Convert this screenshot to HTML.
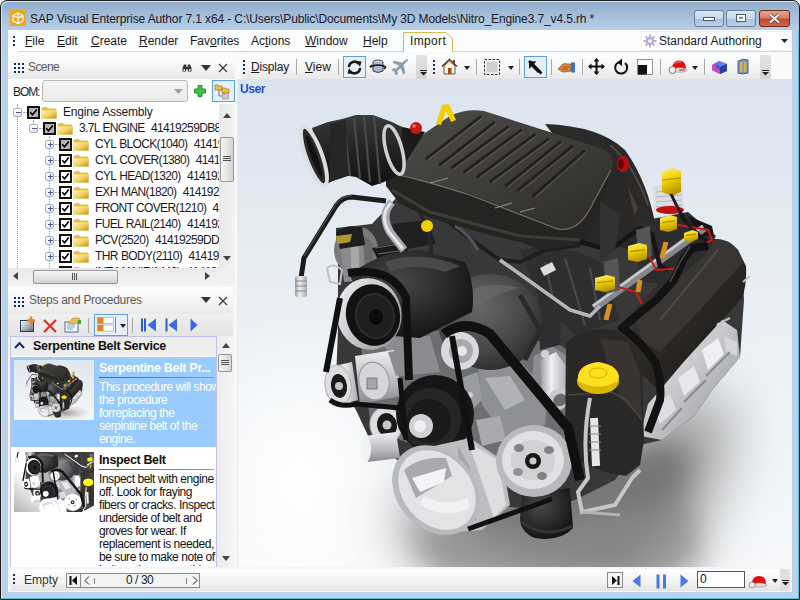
<!DOCTYPE html>
<html><head><meta charset="utf-8">
<style>
*{margin:0;padding:0;box-sizing:border-box}
html,body{width:800px;height:600px;overflow:hidden;background:#fff}
body{position:relative;font-family:"Liberation Sans",sans-serif;font-size:12px;color:#1e1e1e}
.a{position:absolute}
.t{position:absolute;white-space:nowrap;line-height:14px}
#frame{left:0;top:0;width:800px;height:600px;background:linear-gradient(#8fabc9 1px,#a2bcd8 12px,#b6cee7 29px,#b9d1ea 60px);border:1px solid #1a1a1a;border-radius:7px 7px 0 0;box-shadow:inset 1px 1px 0 #dbe7f3}
#client{left:8px;top:30px;width:784px;height:562px;background:#f5f6f7;overflow:hidden}
.u{text-decoration:underline}
.grip3{position:absolute;width:2px;height:2px;background:#1a2a6a}
.menu{font-size:12px;color:#1a1a1a}
.grip9{width:11px;height:11px;background-image:radial-gradient(circle,#102a6a 0,#102a6a 1px,transparent 1px);background-size:4px 4px;}
.tree{font-size:12px;color:#1a1a2a;letter-spacing:-0.65px;word-spacing:0.5px}
.desc{font-size:12px;line-height:14px;letter-spacing:-0.45px}
</style></head><body>
<div id="frame" class="a"></div>
<!-- bottom cyan line -->
<div class="a" style="left:1px;top:598px;width:798px;height:1px;background:#4cc4dc"></div>
<div class="a" style="left:798px;top:30px;width:1px;height:569px;background:#4cc4dc"></div>
<!-- title icon -->
<div class="a" style="left:10px;top:10px;width:16px;height:16px;background:#f0a820;border-radius:1px"></div>
<svg class="a" style="left:10px;top:10px" width="16" height="16"><path d="M8 3 L13 5.5 L13 11 L8 13.5 L3 11 L3 5.5 Z M8 3 V8 M3 5.5 L8 8 L13 5.5 M8 8 V13.5" fill="none" stroke="#fff" stroke-width="1.2"/></svg>
<div class="t" id="title" style="left:30px;top:12px;font-size:12px;color:#1a1a2a;letter-spacing:-0.12px">SAP Visual Enterprise Author 7.1 x64 - C:\Users\Public\Documents\My 3D Models\Nitro_Engine3.7_v4.5.rh *</div>
<!-- window buttons -->
<div class="a" style="left:694px;top:10px;width:30px;height:17px;border:1px solid #6a7d99;border-radius:3px;background:linear-gradient(#dce7f4 0,#c5d6ea 50%,#a9bfdb 51%,#bcd0e8 100%)"></div>
<div class="a" style="left:703px;top:17px;width:12px;height:4px;background:#fff;border:1px solid #4a5a70"></div>
<div class="a" style="left:726px;top:10px;width:30px;height:17px;border:1px solid #6a7d99;border-radius:3px;background:linear-gradient(#dce7f4 0,#c5d6ea 50%,#a9bfdb 51%,#bcd0e8 100%)"></div>
<div class="a" style="left:736px;top:14px;width:10px;height:8px;background:#fff;border:1px solid #4a5a70"></div>
<div class="a" style="left:739px;top:17px;width:4px;height:2px;background:#7090b0"></div>
<div class="a" style="left:759px;top:10px;width:31px;height:17px;border:1px solid #6a2a20;border-radius:3px;background:linear-gradient(#e8a090 0,#d8806a 45%,#c04a2c 55%,#d06848 100%)"></div>
<svg class="a" style="left:767px;top:12px" width="16" height="13"><path d="M3 2.5 L12 10.5 M12 2.5 L3 10.5" stroke="#5a2a20" stroke-width="3.6"/><path d="M3 2.5 L12 10.5 M12 2.5 L3 10.5" stroke="#fff" stroke-width="2.2"/></svg>

<div id="client" class="a"></div>

<!-- MENU BAR -->
<div class="a" style="left:8px;top:30px;width:784px;height:22px;background:#fbfcfc"></div>
<div class="grip3" style="left:13px;top:36px"></div><div class="grip3" style="left:13px;top:40px"></div><div class="grip3" style="left:13px;top:44px"></div>
<div class="a" style="left:18px;top:51px;width:774px;height:1px;background:#d8d8d8"></div>
<div class="t menu" style="left:25px;top:34px"><span class="u">F</span>ile</div>
<div class="t menu" style="left:57px;top:34px"><span class="u">E</span>dit</div>
<div class="t menu" style="left:91px;top:34px"><span class="u">C</span>reate</div>
<div class="t menu" style="left:139px;top:34px"><span class="u">R</span>ender</div>
<div class="t menu" style="left:190px;top:34px">Fav<span class="u">o</span>rites</div>
<div class="t menu" style="left:251px;top:34px">Ac<span class="u">t</span>ions</div>
<div class="t menu" style="left:305px;top:34px"><span class="u">W</span>indow</div>
<div class="t menu" style="left:363px;top:34px"><span class="u">H</span>elp</div>
<svg class="a" style="left:400px;top:30px" width="58" height="24"><path d="M3.5 24 V2.5 H46 L52.5 9 V24" fill="#fff" stroke="#e6b34a" stroke-width="1"/></svg>
<div class="t menu" style="left:410px;top:34px;letter-spacing:0.35px">Import</div>
<!-- Standard authoring combo -->
<div class="a" style="left:641px;top:31px;width:150px;height:20px;background:#fff;border:1px solid #eef0f2"></div>
<svg class="a" style="left:643px;top:34px" width="14" height="14"><g transform="translate(7 7)"><circle r="4.3" fill="#b8b0e0"/><g fill="#b8b0e0"><rect x="-1" y="-6.5" width="2" height="13"/><rect x="-6.5" y="-1" width="13" height="2"/><rect x="-1" y="-6.5" width="2" height="13" transform="rotate(45)"/><rect x="-1" y="-6.5" width="2" height="13" transform="rotate(-45)"/></g><circle r="1.8" fill="#fff"/></g></svg>
<div class="t menu" style="left:659px;top:34px">Standard Authoring</div>
<svg class="a" style="left:781px;top:39px" width="7" height="4"><path d="M0 0 H7 L3.5 4Z" fill="#222"/></svg>

<!-- SCENE PANEL -->
<div class="a" style="left:8px;top:52px;width:227px;height:27px;background:linear-gradient(#fdfdfd 0,#fafafa 40%,#e9e9e9 100%)"></div>
<div class="grip9 a" style="left:13px;top:62px"></div>
<div class="t" style="left:28px;top:60px;color:#5a5a5a;letter-spacing:-0.6px">Scene</div>
<svg class="a" style="left:182px;top:64px" width="11" height="8"><path d="M2 0.5 H4.3 V2.5 L5 3.2 L5.7 2.5 V0.5 H8 L9.5 4 V7.5 H6 V5.5 H4 V7.5 H0.5 V4Z" fill="#333"/><rect x="1.5" y="5" width="1.5" height="2" fill="#ddd"/><rect x="7" y="5" width="1.5" height="2" fill="#ddd"/></svg>
<svg class="a" style="left:201px;top:65px" width="10" height="6"><path d="M0 0 H10 L5 6Z" fill="#333"/></svg>
<svg class="a" style="left:218px;top:63px" width="10" height="10"><path d="M1 1 L9 9 M9 1 L1 9" stroke="#3a3a3a" stroke-width="1.15"/></svg>
<div class="a" style="left:8px;top:79px;width:227px;height:189px;background:#fff"></div>
<div class="t" style="left:13px;top:85px;letter-spacing:-1.1px">BOM:</div>
<div class="a" style="left:42px;top:80px;width:146px;height:22px;border:1px solid #b8b8b8;border-radius:3px;background:linear-gradient(#f4f4f4,#ececec)"></div>
<svg class="a" style="left:174px;top:89px" width="9" height="5"><path d="M0 0 H9 L4.5 5Z" fill="#a0a0a0"/></svg>
<svg class="a" style="left:194px;top:85px" width="12" height="12"><path d="M4 0.5 H8 V4 H11.5 V8 H8 V11.5 H4 V8 H0.5 V4 H4Z" fill="#3cc43c" stroke="#1a7a1a" stroke-width="0.8"/></svg>
<div class="a" style="left:212px;top:80px;width:23px;height:22px;border:1px solid #5aa0e8;background:#e4f0fc"></div>
<svg class="a" style="left:214px;top:83px" width="20" height="17"><path d="M1 2 H4 L5 3 H8 V7 H1Z" fill="#f0c040" stroke="#a07020" stroke-width="0.7"/><path d="M8 5 H11 L12 6 H15 V10 H8Z" fill="#f0c040" stroke="#a07020" stroke-width="0.7"/><path d="M5 7 V13 H9 M10 10 V13" stroke="#555" stroke-width="0.8" fill="none"/><rect x="8.5" y="11" width="6" height="5" fill="#ccc" stroke="#999" stroke-width="0.7"/></svg>

<svg width="0" height="0" style="position:absolute"><defs><linearGradient id="ng" x1="0" y1="0" x2="1" y2="1"><stop offset="0" stop-color="#fff"/><stop offset="1" stop-color="#606a80"/></linearGradient><linearGradient id="fg" x1="0" y1="0" x2="1" y2="1"><stop offset="0" stop-color="#fff4c0"/><stop offset="0.5" stop-color="#f4d468"/><stop offset="1" stop-color="#c89020"/></linearGradient></defs></svg><div class="a" style="left:8px;top:104px;width:211px;height:164px;overflow:hidden">
<div class="a" style="left:9px;top:0;width:1px;height:164px;border-left:1px dotted #a0a0a0"></div>
<div class="a" style="left:25px;top:16px;width:1px;height:8px;border-left:1px dotted #a0a0a0"></div>
<div class="a" style="left:41px;top:32px;width:1px;height:132px;border-left:1px dotted #a0a0a0"></div>
<div class="a" style="left:5px;top:4px;width:9px;height:9px;border:1px solid #a8b0bc;border-radius:2px;background:linear-gradient(#fff,#e4e6ea)"><div class="a" style="left:2px;top:3px;width:5px;height:1px;background:#4a5a9a"></div></div>
<div class="a" style="left:15px;top:8px;width:4px;height:1px;border-top:1px dotted #a0a0a0"></div>
<div class="a" style="left:19px;top:2px;width:13px;height:13px;border:2px solid #111;background:#b4b4b4"></div>
<svg class="a" style="left:21px;top:4px" width="9" height="9"><path d="M1.2 4.3 L3.5 6.8 L7.8 1.5" fill="none" stroke="#000" stroke-width="1.6"/></svg>
<svg class="a" style="left:33px;top:2px" width="16" height="13"><path d="M0.5 2.5 Q0.5 1 2 1 H6 L7 2.5 H14 Q15.5 2.5 15.5 4 V12.5 H0.5Z" fill="#e8c048"/><path d="M0.5 4.5 H15.5 V12.5 H0.5Z" fill="url(#fg)"/></svg>
<div class="t tree" style="left:55px;top:1px;letter-spacing:-0.2px">Engine Assembly</div>
<div class="a" style="left:21px;top:20px;width:9px;height:9px;border:1px solid #a8b0bc;border-radius:2px;background:linear-gradient(#fff,#e4e6ea)"><div class="a" style="left:2px;top:3px;width:5px;height:1px;background:#4a5a9a"></div></div>
<div class="a" style="left:31px;top:24px;width:4px;height:1px;border-top:1px dotted #a0a0a0"></div>
<div class="a" style="left:35px;top:18px;width:13px;height:13px;border:2px solid #111;background:#b4b4b4"></div>
<svg class="a" style="left:37px;top:20px" width="9" height="9"><path d="M1.2 4.3 L3.5 6.8 L7.8 1.5" fill="none" stroke="#000" stroke-width="1.6"/></svg>
<svg class="a" style="left:49px;top:18px" width="16" height="13"><path d="M0.5 2.5 Q0.5 1 2 1 H6 L7 2.5 H14 Q15.5 2.5 15.5 4 V12.5 H0.5Z" fill="#e8c048"/><path d="M0.5 4.5 H15.5 V12.5 H0.5Z" fill="url(#fg)"/></svg>
<div class="t tree" style="left:71px;top:17px">3.7L ENGINE&nbsp; 41419259DB8</div>
<div class="a" style="left:37px;top:36px;width:9px;height:9px;border:1px solid #a8b0bc;border-radius:2px;background:linear-gradient(#fff,#e4e6ea)"><div class="a" style="left:2px;top:3px;width:5px;height:1px;background:#4a5a9a"></div><div class="a" style="left:4px;top:1px;width:1px;height:5px;background:#4a5a9a"></div></div>
<div class="a" style="left:47px;top:40px;width:4px;height:1px;border-top:1px dotted #a0a0a0"></div>
<div class="a" style="left:51px;top:34px;width:13px;height:13px;border:2px solid #111;background:#b4b4b4"></div>
<svg class="a" style="left:53px;top:36px" width="9" height="9"><path d="M1.2 4.3 L3.5 6.8 L7.8 1.5" fill="none" stroke="#000" stroke-width="1.6"/></svg>
<svg class="a" style="left:65px;top:34px" width="16" height="13"><path d="M0.5 2.5 Q0.5 1 2 1 H6 L7 2.5 H14 Q15.5 2.5 15.5 4 V12.5 H0.5Z" fill="#e8c048"/><path d="M0.5 4.5 H15.5 V12.5 H0.5Z" fill="url(#fg)"/></svg>
<div class="t tree" style="left:87px;top:33px">CYL BLOCK(1040)&nbsp; 41419259DB8</div>
<div class="a" style="left:37px;top:52px;width:9px;height:9px;border:1px solid #a8b0bc;border-radius:2px;background:linear-gradient(#fff,#e4e6ea)"><div class="a" style="left:2px;top:3px;width:5px;height:1px;background:#4a5a9a"></div><div class="a" style="left:4px;top:1px;width:1px;height:5px;background:#4a5a9a"></div></div>
<div class="a" style="left:47px;top:56px;width:4px;height:1px;border-top:1px dotted #a0a0a0"></div>
<div class="a" style="left:51px;top:50px;width:13px;height:13px;border:2px solid #111;background:#fff"></div>
<svg class="a" style="left:53px;top:52px" width="9" height="9"><path d="M1.2 4.3 L3.5 6.8 L7.8 1.5" fill="none" stroke="#000" stroke-width="1.6"/></svg>
<svg class="a" style="left:65px;top:50px" width="16" height="13"><path d="M0.5 2.5 Q0.5 1 2 1 H6 L7 2.5 H14 Q15.5 2.5 15.5 4 V12.5 H0.5Z" fill="#e8c048"/><path d="M0.5 4.5 H15.5 V12.5 H0.5Z" fill="url(#fg)"/></svg>
<div class="t tree" style="left:87px;top:49px">CYL COVER(1380)&nbsp; 41419259DB8</div>
<div class="a" style="left:37px;top:68px;width:9px;height:9px;border:1px solid #a8b0bc;border-radius:2px;background:linear-gradient(#fff,#e4e6ea)"><div class="a" style="left:2px;top:3px;width:5px;height:1px;background:#4a5a9a"></div><div class="a" style="left:4px;top:1px;width:1px;height:5px;background:#4a5a9a"></div></div>
<div class="a" style="left:47px;top:72px;width:4px;height:1px;border-top:1px dotted #a0a0a0"></div>
<div class="a" style="left:51px;top:66px;width:13px;height:13px;border:2px solid #111;background:#fff"></div>
<svg class="a" style="left:53px;top:68px" width="9" height="9"><path d="M1.2 4.3 L3.5 6.8 L7.8 1.5" fill="none" stroke="#000" stroke-width="1.6"/></svg>
<svg class="a" style="left:65px;top:66px" width="16" height="13"><path d="M0.5 2.5 Q0.5 1 2 1 H6 L7 2.5 H14 Q15.5 2.5 15.5 4 V12.5 H0.5Z" fill="#e8c048"/><path d="M0.5 4.5 H15.5 V12.5 H0.5Z" fill="url(#fg)"/></svg>
<div class="t tree" style="left:87px;top:65px">CYL HEAD(1320)&nbsp; 41419259DB8</div>
<div class="a" style="left:37px;top:84px;width:9px;height:9px;border:1px solid #a8b0bc;border-radius:2px;background:linear-gradient(#fff,#e4e6ea)"><div class="a" style="left:2px;top:3px;width:5px;height:1px;background:#4a5a9a"></div><div class="a" style="left:4px;top:1px;width:1px;height:5px;background:#4a5a9a"></div></div>
<div class="a" style="left:47px;top:88px;width:4px;height:1px;border-top:1px dotted #a0a0a0"></div>
<div class="a" style="left:51px;top:82px;width:13px;height:13px;border:2px solid #111;background:#fff"></div>
<svg class="a" style="left:53px;top:84px" width="9" height="9"><path d="M1.2 4.3 L3.5 6.8 L7.8 1.5" fill="none" stroke="#000" stroke-width="1.6"/></svg>
<svg class="a" style="left:65px;top:82px" width="16" height="13"><path d="M0.5 2.5 Q0.5 1 2 1 H6 L7 2.5 H14 Q15.5 2.5 15.5 4 V12.5 H0.5Z" fill="#e8c048"/><path d="M0.5 4.5 H15.5 V12.5 H0.5Z" fill="url(#fg)"/></svg>
<div class="t tree" style="left:87px;top:81px">EXH MAN(1820)&nbsp; 41419259DB8</div>
<div class="a" style="left:37px;top:100px;width:9px;height:9px;border:1px solid #a8b0bc;border-radius:2px;background:linear-gradient(#fff,#e4e6ea)"><div class="a" style="left:2px;top:3px;width:5px;height:1px;background:#4a5a9a"></div><div class="a" style="left:4px;top:1px;width:1px;height:5px;background:#4a5a9a"></div></div>
<div class="a" style="left:47px;top:104px;width:4px;height:1px;border-top:1px dotted #a0a0a0"></div>
<div class="a" style="left:51px;top:98px;width:13px;height:13px;border:2px solid #111;background:#fff"></div>
<svg class="a" style="left:53px;top:100px" width="9" height="9"><path d="M1.2 4.3 L3.5 6.8 L7.8 1.5" fill="none" stroke="#000" stroke-width="1.6"/></svg>
<svg class="a" style="left:65px;top:98px" width="16" height="13"><path d="M0.5 2.5 Q0.5 1 2 1 H6 L7 2.5 H14 Q15.5 2.5 15.5 4 V12.5 H0.5Z" fill="#e8c048"/><path d="M0.5 4.5 H15.5 V12.5 H0.5Z" fill="url(#fg)"/></svg>
<div class="t tree" style="left:87px;top:97px">FRONT COVER(1210)&nbsp; 41419259DB8</div>
<div class="a" style="left:37px;top:116px;width:9px;height:9px;border:1px solid #a8b0bc;border-radius:2px;background:linear-gradient(#fff,#e4e6ea)"><div class="a" style="left:2px;top:3px;width:5px;height:1px;background:#4a5a9a"></div><div class="a" style="left:4px;top:1px;width:1px;height:5px;background:#4a5a9a"></div></div>
<div class="a" style="left:47px;top:120px;width:4px;height:1px;border-top:1px dotted #a0a0a0"></div>
<div class="a" style="left:51px;top:114px;width:13px;height:13px;border:2px solid #111;background:#fff"></div>
<svg class="a" style="left:53px;top:116px" width="9" height="9"><path d="M1.2 4.3 L3.5 6.8 L7.8 1.5" fill="none" stroke="#000" stroke-width="1.6"/></svg>
<svg class="a" style="left:65px;top:114px" width="16" height="13"><path d="M0.5 2.5 Q0.5 1 2 1 H6 L7 2.5 H14 Q15.5 2.5 15.5 4 V12.5 H0.5Z" fill="#e8c048"/><path d="M0.5 4.5 H15.5 V12.5 H0.5Z" fill="url(#fg)"/></svg>
<div class="t tree" style="left:87px;top:113px">FUEL RAIL(2140)&nbsp; 41419259DB8</div>
<div class="a" style="left:37px;top:132px;width:9px;height:9px;border:1px solid #a8b0bc;border-radius:2px;background:linear-gradient(#fff,#e4e6ea)"><div class="a" style="left:2px;top:3px;width:5px;height:1px;background:#4a5a9a"></div><div class="a" style="left:4px;top:1px;width:1px;height:5px;background:#4a5a9a"></div></div>
<div class="a" style="left:47px;top:136px;width:4px;height:1px;border-top:1px dotted #a0a0a0"></div>
<div class="a" style="left:51px;top:130px;width:13px;height:13px;border:2px solid #111;background:#fff"></div>
<svg class="a" style="left:53px;top:132px" width="9" height="9"><path d="M1.2 4.3 L3.5 6.8 L7.8 1.5" fill="none" stroke="#000" stroke-width="1.6"/></svg>
<svg class="a" style="left:65px;top:130px" width="16" height="13"><path d="M0.5 2.5 Q0.5 1 2 1 H6 L7 2.5 H14 Q15.5 2.5 15.5 4 V12.5 H0.5Z" fill="#e8c048"/><path d="M0.5 4.5 H15.5 V12.5 H0.5Z" fill="url(#fg)"/></svg>
<div class="t tree" style="left:87px;top:129px">PCV(2520)&nbsp; 41419259DDB8</div>
<div class="a" style="left:37px;top:148px;width:9px;height:9px;border:1px solid #a8b0bc;border-radius:2px;background:linear-gradient(#fff,#e4e6ea)"><div class="a" style="left:2px;top:3px;width:5px;height:1px;background:#4a5a9a"></div><div class="a" style="left:4px;top:1px;width:1px;height:5px;background:#4a5a9a"></div></div>
<div class="a" style="left:47px;top:152px;width:4px;height:1px;border-top:1px dotted #a0a0a0"></div>
<div class="a" style="left:51px;top:146px;width:13px;height:13px;border:2px solid #111;background:#fff"></div>
<svg class="a" style="left:53px;top:148px" width="9" height="9"><path d="M1.2 4.3 L3.5 6.8 L7.8 1.5" fill="none" stroke="#000" stroke-width="1.6"/></svg>
<svg class="a" style="left:65px;top:146px" width="16" height="13"><path d="M0.5 2.5 Q0.5 1 2 1 H6 L7 2.5 H14 Q15.5 2.5 15.5 4 V12.5 H0.5Z" fill="#e8c048"/><path d="M0.5 4.5 H15.5 V12.5 H0.5Z" fill="url(#fg)"/></svg>
<div class="t tree" style="left:87px;top:145px">THR BODY(2110)&nbsp; 41419259DB8</div>
<div class="a" style="left:37px;top:164px;width:9px;height:9px;border:1px solid #a8b0bc;border-radius:2px;background:linear-gradient(#fff,#e4e6ea)"><div class="a" style="left:2px;top:3px;width:5px;height:1px;background:#4a5a9a"></div><div class="a" style="left:4px;top:1px;width:1px;height:5px;background:#4a5a9a"></div></div>
<div class="a" style="left:47px;top:168px;width:4px;height:1px;border-top:1px dotted #a0a0a0"></div>
<div class="a" style="left:51px;top:162px;width:13px;height:13px;border:2px solid #111;background:#fff"></div>
<svg class="a" style="left:53px;top:164px" width="9" height="9"><path d="M1.2 4.3 L3.5 6.8 L7.8 1.5" fill="none" stroke="#000" stroke-width="1.6"/></svg>
<svg class="a" style="left:65px;top:162px" width="16" height="13"><path d="M0.5 2.5 Q0.5 1 2 1 H6 L7 2.5 H14 Q15.5 2.5 15.5 4 V12.5 H0.5Z" fill="#e8c048"/><path d="M0.5 4.5 H15.5 V12.5 H0.5Z" fill="url(#fg)"/></svg>
<div class="t tree" style="left:87px;top:161px">INT MANIF(1440)&nbsp; 41419259DB8</div>
</div>
<div class="a" style="left:219px;top:104px;width:16px;height:164px;background:linear-gradient(90deg,#e8e8e8,#f4f4f4)"></div>
<svg class="a" style="left:223px;top:113px" width="8" height="5"><path d="M0 5 L4 0 L8 5Z" fill="#444"/></svg>
<div class="a" style="left:220px;top:137px;width:14px;height:45px;border:1px solid #989898;border-radius:2px;background:linear-gradient(90deg,#f4f4f4,#e6e6e6 50%,#d4d4d4)"></div>
<div class="a" style="left:223px;top:156px;width:8px;height:1px;background:#555"></div>
<div class="a" style="left:223px;top:158px;width:8px;height:1px;background:#555"></div>
<div class="a" style="left:223px;top:160px;width:8px;height:1px;background:#555"></div>
<svg class="a" style="left:223px;top:256px" width="8" height="5"><path d="M0 0 L4 5 L8 0Z" fill="#444"/></svg>
<!-- hscroll -->
<div class="a" style="left:8px;top:268px;width:227px;height:17px;background:linear-gradient(#e8e8e8,#f4f4f4)"></div>
<svg class="a" style="left:13px;top:272px" width="5" height="8"><path d="M5 0 L0 4 L5 8Z" fill="#444"/></svg>
<div class="a" style="left:33px;top:270px;width:85px;height:14px;border:1px solid #989898;border-radius:2px;background:linear-gradient(#f6f6f6,#e6e6e6 50%,#d2d2d2)"></div>
<div class="a" style="left:72px;top:273px;width:1px;height:7px;background:#555"></div>
<div class="a" style="left:74px;top:273px;width:1px;height:7px;background:#555"></div>
<div class="a" style="left:76px;top:273px;width:1px;height:7px;background:#555"></div>
<svg class="a" style="left:205px;top:272px" width="5" height="8"><path d="M0 0 L5 4 L0 8Z" fill="#444"/></svg><div class="a" style="left:217px;top:268px;width:18px;height:17px;background:#f0f0f0"></div>


<!-- splitter -->
<div class="a" style="left:235px;top:52px;width:3px;height:516px;background:#f8f9fa"></div>
<div class="a" style="left:8px;top:284px;width:227px;height:3px;background:#f4f4f4"></div>
<!-- STEPS PANEL -->
<div class="a" style="left:8px;top:287px;width:225px;height:27px;background:linear-gradient(#fdfdfd 0,#f8f8f8 40%,#e9e9e9 100%)"></div>
<div class="grip9 a" style="left:13px;top:296px"></div>
<div class="t" style="left:29px;top:293px;color:#5a5a5a;letter-spacing:-0.3px">Steps and Procedures</div>
<svg class="a" style="left:201px;top:297px" width="10" height="6"><path d="M0 0 H10 L5 6Z" fill="#333"/></svg>
<svg class="a" style="left:218px;top:296px" width="10" height="10"><path d="M1 1 L9 9 M9 1 L1 9" stroke="#3a3a3a" stroke-width="1.15"/></svg>
<div class="a" style="left:8px;top:314px;width:225px;height:23px;background:linear-gradient(#f0f0f0,#e4e4e4);border-radius:0 6px 0 0"></div>
<svg class="a" style="left:19px;top:316px" width="18" height="18"><rect x="1.5" y="4.5" width="13" height="11" fill="url(#ng)" stroke="#2a3a5a" stroke-width="1"/><path d="M12 0.5 V8.5 M8 4.5 H16" stroke="#f08020" stroke-width="2.5"/></svg>
<svg class="a" style="left:42px;top:318px" width="16" height="16"><path d="M2 2 L14 14 M14 2 L2 14" stroke="#e03020" stroke-width="2.2"/></svg>
<svg class="a" style="left:64px;top:317px" width="18" height="16"><rect x="1" y="5" width="13" height="10" fill="#f4f8fc" stroke="#4a6a9a"/><path d="M3 8 H11 M3 10 H11 M3 12 H9" stroke="#6a8aba" stroke-width="0.8"/><path d="M4 6 L9 1 H15 L16 4 L11 7Z" fill="#e8c050" stroke="#a08030" stroke-width="0.6"/><rect x="14" y="3" width="3" height="4" fill="#40a040"/></svg>
<div class="a" style="left:88px;top:318px;width:1px;height:15px;background:#a8a8a8"></div>
<div class="a" style="left:94px;top:314px;width:34px;height:22px;border:1px solid #60a0e0;background:#e6f0fa"></div>
<svg class="a" style="left:97px;top:317px" width="17" height="15"><rect x="0.5" y="0.5" width="16" height="6" fill="#fff" stroke="#999" stroke-width="0.6"/><rect x="0.5" y="8" width="16" height="6" fill="#fff" stroke="#999" stroke-width="0.6"/><rect x="0.5" y="0.5" width="6" height="6" fill="#e88420"/><rect x="0.5" y="8" width="6" height="6" fill="#e88420"/></svg>
<div class="a" style="left:115px;top:317px;width:1px;height:16px;background:#5090e0"></div>
<svg class="a" style="left:120px;top:324px" width="6" height="4"><path d="M0 0 H6 L3 4Z" fill="#222"/></svg>
<div class="a" style="left:132px;top:318px;width:1px;height:15px;background:#a8a8a8"></div>
<svg class="a" style="left:140px;top:318px" width="17" height="14"><rect x="1" y="0.5" width="2" height="13" fill="#2a5ad0"/><rect x="4" y="0.5" width="2" height="13" fill="#2a5ad0"/><path d="M16 0.5 L7.5 7 L16 13.5Z" fill="#3a6ae0"/></svg>
<svg class="a" style="left:165px;top:318px" width="13" height="14"><rect x="0.5" y="0.5" width="2" height="13" fill="#2a5ad0"/><path d="M12 0.5 L3.5 7 L12 13.5Z" fill="#3a6ae0"/></svg>
<svg class="a" style="left:190px;top:318px" width="8" height="14"><path d="M0.5 0.5 L7.5 7 L0.5 13.5Z" fill="#3a6ae0"/></svg>
<!-- list -->
<div class="a" style="left:10px;top:336px;width:207px;height:231px;background:#fff;border:1px solid #c0c0f0;border-bottom:none"></div>
<div class="a" style="left:217px;top:336px;width:16px;height:231px;background:linear-gradient(90deg,#ececec,#f6f6f6)"></div>
<svg class="a" style="left:222px;top:343px" width="8" height="5"><path d="M0 5 L4 0 L8 5Z" fill="#444"/></svg>
<div class="a" style="left:218px;top:354px;width:14px;height:18px;border:1px solid #989898;border-radius:2px;background:linear-gradient(90deg,#f4f4f4,#e6e6e6 50%,#d4d4d4)"></div>
<div class="a" style="left:221px;top:360px;width:8px;height:1px;background:#555"></div>
<div class="a" style="left:221px;top:362px;width:8px;height:1px;background:#555"></div>
<div class="a" style="left:221px;top:364px;width:8px;height:1px;background:#555"></div>
<svg class="a" style="left:222px;top:556px" width="8" height="5"><path d="M0 0 L4 5 L8 0Z" fill="#444"/></svg>
<div class="a" style="left:11px;top:337px;width:205px;height:19px;background:#eeeeee"></div>
<svg class="a" style="left:14px;top:341px" width="11" height="8"><path d="M1 7 L5.5 2 L10 7" fill="none" stroke="#1a2a80" stroke-width="2"/></svg>
<div class="t" style="left:33px;top:339px;font-weight:bold;font-size:12.5px;color:#111;letter-spacing:-0.29px">Serpentine Belt Service</div>
<!-- selected item -->
<div class="a" style="left:11px;top:357px;width:205px;height:90px;background:#99cbfe"></div>
<svg class="a" style="left:14px;top:360px" width="80" height="60"><defs><radialGradient id="tsh" cx="0.5" cy="0.5" r="0.5"><stop offset="0" stop-color="#909090"/><stop offset="1" stop-color="#d0d0d0" stop-opacity="0"/></radialGradient><linearGradient id="tbg" x1="0" y1="0" x2="0" y2="1"><stop offset="0" stop-color="#dfe6ee"/><stop offset="1" stop-color="#f6f8fa"/></linearGradient></defs><rect width="80" height="60" fill="url(#tbg)"/><ellipse cx="50" cy="53" rx="28" ry="8" fill="url(#tsh)"/><g transform="translate(-25.3 -10.4) scale(0.126)"><use href="#eng"/></g></svg>
<div class="t" style="left:99px;top:361px;font-weight:bold;font-size:12.5px;color:#fff;letter-spacing:-0.3px">Serpentine Belt Pr...</div>
<div class="a" style="left:99px;top:377px;width:115px;height:1px;background:linear-gradient(90deg,#d83030,#f08030)"></div>
<div class="a" style="left:99px;top:378px;width:117px;height:68px;overflow:hidden"><div class="t desc" style="left:0;top:2px;color:#fff">This procedure will show</div><div class="t desc" style="left:0;top:15px;color:#fff">the procedure</div><div class="t desc" style="left:0;top:28px;color:#fff">forreplacing the</div><div class="t desc" style="left:0;top:41px;color:#fff">serpintine belt of the</div><div class="t desc" style="left:0;top:54px;color:#fff">engine.</div></div>
<!-- item 2 -->
<svg class="a" style="left:14px;top:452px;filter:brightness(1.3)" width="80" height="60"><defs><linearGradient id="t2bg" x1="1" y1="0" x2="0" y2="1"><stop offset="0" stop-color="#ffffff"/><stop offset="0.6" stop-color="#c8c8c8"/><stop offset="1" stop-color="#8a8a8a"/></linearGradient></defs><rect width="80" height="60" fill="url(#t2bg)"/><g transform="translate(-69.3 -60.4) scale(0.24)"><use href="#eng"/></g></svg>
<div class="t" style="left:99px;top:453px;font-weight:bold;font-size:12.5px;color:#111;letter-spacing:-0.35px">Inspect Belt</div>
<div class="a" style="left:99px;top:469px;width:115px;height:1px;background:linear-gradient(90deg,#d83030,#f08030)"></div>
<div class="a" style="left:99px;top:470px;width:118px;height:96px;overflow:hidden"><div class="t desc" style="left:0;top:2px;color:#111">Inspect belt with engine</div><div class="t desc" style="left:0;top:15px;color:#111">off. Look for fraying</div><div class="t desc" style="left:0;top:28px;color:#111">fibers or cracks. Inspect</div><div class="t desc" style="left:0;top:41px;color:#111">underside of belt and</div><div class="t desc" style="left:0;top:54px;color:#111">groves for wear. If</div><div class="t desc" style="left:0;top:67px;color:#111">replacement is needed,</div><div class="t desc" style="left:0;top:80px;color:#111">be sure to make note of</div><div class="t desc" style="left:0;top:93px;color:#111">belt routing or use this</div></div>

<!-- BOTTOM TOOLBAR -->
<div class="a" style="left:8px;top:567px;width:784px;height:25px;background:#f4f5f6"></div>
<div class="a" style="left:10px;top:569px;width:780px;height:22px;border-radius:3px;background:linear-gradient(#fdfdfd,#f2f2f2 60%,#e4e4e4)"></div>
<div class="grip3" style="left:13px;top:574px"></div><div class="grip3" style="left:13px;top:578px"></div><div class="grip3" style="left:13px;top:582px"></div>
<div class="t" style="left:24px;top:573px;color:#333">Empty</div>
<div class="a" style="left:66px;top:573px;width:134px;height:15px;border:1px solid #8a8a8a;background:#f4f4f4"></div>
<div class="a" style="left:80px;top:573px;width:1px;height:15px;background:#8a8a8a"></div>
<svg class="a" style="left:69px;top:576px" width="9" height="9"><rect x="0.5" y="0" width="2" height="9" fill="#111"/><path d="M8 0 L3 4.5 L8 9Z" fill="#111"/></svg>
<svg class="a" style="left:84px;top:576px" width="6" height="9"><path d="M5 0.5 L1 4.5 L5 8.5" fill="none" stroke="#222" stroke-width="1"/></svg>
<div class="a" style="left:94px;top:578px;width:1px;height:6px;background:#888"></div>
<div class="t" style="left:126px;top:573px;color:#222;letter-spacing:-0.45px">0 / 30</div>
<div class="a" style="left:186px;top:578px;width:1px;height:6px;background:#888"></div>
<svg class="a" style="left:192px;top:576px" width="6" height="9"><path d="M1 0.5 L5 4.5 L1 8.5" fill="none" stroke="#222" stroke-width="1"/></svg>
<div class="a" style="left:607px;top:572px;width:16px;height:16px;border:1px solid #8a8a8a;background:#f6f6f6"></div>
<svg class="a" style="left:611px;top:576px" width="9" height="9"><path d="M1 0 L6 4.5 L1 9Z" fill="#111"/><rect x="6.5" y="0" width="2" height="9" fill="#111"/></svg>
<svg class="a" style="left:632px;top:574px" width="9" height="14"><path d="M8.5 0.5 L0.5 7 L8.5 13.5Z" fill="#4a7ae8"/></svg>
<svg class="a" style="left:656px;top:574px" width="11" height="15"><rect x="0.5" y="0.5" width="3" height="14" fill="#4a7ae8"/><rect x="7" y="0.5" width="3" height="14" fill="#4a7ae8"/></svg>
<svg class="a" style="left:680px;top:574px" width="9" height="14"><path d="M0.5 0.5 L8.5 7 L0.5 13.5Z" fill="#4a7ae8"/></svg>
<div class="a" style="left:697px;top:571px;width:48px;height:17px;border:1px solid #555;background:#fff"></div>
<div class="t" style="left:700px;top:572px;color:#111;font-size:12px">0</div>
<svg class="a" style="left:748px;top:574px" width="20" height="15"><path d="M4 10 Q4 2 11 2 Q18 2 18 10Z" fill="#e41010"/><ellipse cx="11" cy="11" rx="8" ry="2" fill="#ddd" stroke="#888" stroke-width="0.6"/><circle cx="4" cy="11" r="3" fill="#eee" stroke="#777" stroke-width="0.7"/></svg>
<svg class="a" style="left:772px;top:579px" width="6" height="4"><path d="M0 0 H6 L3 4Z" fill="#222"/></svg>
<div class="a" style="left:780px;top:569px;width:10px;height:22px;background:#e0e0e0;border-radius:0 3px 3px 0"></div>
<svg class="a" style="left:782px;top:580px" width="7" height="6"><rect x="0" y="0" width="7" height="1" fill="#222"/><path d="M0 2 H7 L3.5 5.5Z" fill="#222"/></svg>


<!-- TOOLBAR ROW -->
<div class="a" style="left:238px;top:52px;width:554px;height:27px;background:#f9fafb"></div>
<div class="a" style="left:241px;top:55px;width:186px;height:24px;border-radius:3px 3px 0 0;background:linear-gradient(#fefefe,#f6f6f6 50%,#e8e8e8)"></div>
<div class="a" style="left:416px;top:55px;width:11px;height:24px;border-radius:0 3px 3px 0;background:linear-gradient(#e2e2e2,#d4d4d4)"></div>
<svg class="a" style="left:420px;top:70px" width="7" height="6"><rect x="0" y="0" width="7" height="1" fill="#222"/><path d="M0 2 H7 L3.5 5.5Z" fill="#222"/></svg>
<div class="grip3" style="left:243px;top:60px"></div><div class="grip3" style="left:243px;top:64px"></div><div class="grip3" style="left:243px;top:68px"></div><div class="grip3" style="left:243px;top:72px"></div>
<div class="t menu" style="left:251px;top:60px;letter-spacing:-0.2px"><span class="u">D</span>isplay</div>
<div class="a" style="left:296px;top:59px;width:1px;height:16px;background:#a8a8a8"></div>
<div class="t menu" style="left:305px;top:60px"><span class="u">V</span>iew</div>
<div class="a" style="left:338px;top:59px;width:1px;height:16px;background:#a8a8a8"></div>
<div class="a" style="left:343px;top:56px;width:23px;height:22px;border:1px solid #60a0e0;background:#e4f0fb"></div>
<svg class="a" style="left:346px;top:59px" width="17" height="17"><path d="M3 8 A5.5 5.5 0 0 1 13 5" fill="none" stroke="#1a1a1a" stroke-width="2.6"/><path d="M14 9 A5.5 5.5 0 0 1 4 12" fill="none" stroke="#1a1a1a" stroke-width="2.6"/><path d="M10 2 L15.5 2.5 L14 8Z" fill="#1a1a1a"/><path d="M7 15 L1.5 14.5 L3 9Z" fill="#1a1a1a"/></svg>
<svg class="a" style="left:369px;top:58px" width="18" height="18"><ellipse cx="9" cy="4" rx="5" ry="2" fill="#d0d8e8" stroke="#333" stroke-width="0.9"/><path d="M4 4 V13 Q9 16 14 13 V4" fill="#a8b8d0" stroke="#333" stroke-width="0.9"/><path d="M1 9 Q9 5 17 9" fill="none" stroke="#111" stroke-width="1.6"/><path d="M1 9 L3 7 M17 9 L15 11" stroke="#111" stroke-width="1.4"/></svg>
<svg class="a" style="left:391px;top:58px" width="18" height="18"><path d="M15.5 1.5 Q17 1 16.5 2.5 L12 7 L14 15 L12.5 16 L9.5 9.5 L6 13 L6.5 16 L5 17 L3.5 13.5 L1 12 L2 10.5 L5 11 L8.5 7.5 L2 4.5 L3 3 L11 5Z" fill="#88a0b8" stroke="#6a8098" stroke-width="0.5"/></svg>

<div class="a" style="left:428px;top:55px;width:343px;height:24px;border-radius:3px 3px 0 0;background:linear-gradient(#fefefe,#f6f6f6 50%,#e8e8e8)"></div>
<div class="a" style="left:760px;top:55px;width:11px;height:24px;border-radius:0 3px 3px 0;background:linear-gradient(#e2e2e2,#d4d4d4)"></div>
<svg class="a" style="left:762px;top:70px" width="7" height="6"><rect x="0" y="0" width="7" height="1" fill="#222"/><path d="M0 2 H7 L3.5 5.5Z" fill="#222"/></svg>
<div class="grip3" style="left:433px;top:60px"></div><div class="grip3" style="left:433px;top:64px"></div><div class="grip3" style="left:433px;top:68px"></div><div class="grip3" style="left:433px;top:72px"></div>
<svg class="a" style="left:441px;top:58px" width="17" height="17"><path d="M1 8.5 L8.5 1.5 L16 8.5" fill="none" stroke="#5a3a20" stroke-width="1.6"/><path d="M3 8 V16 H14 V8 L8.5 3Z" fill="#f8f0e0" stroke="#6a4a30" stroke-width="0.9"/><rect x="7" y="10" width="3.5" height="6" fill="#a0501a"/><rect x="12" y="2" width="2" height="4" fill="#6a4a30"/></svg>
<svg class="a" style="left:464px;top:66px" width="6" height="4"><path d="M0 0 H6 L3 4Z" fill="#222"/></svg>
<div class="a" style="left:476px;top:59px;width:1px;height:16px;background:#a8a8a8"></div>
<svg class="a" style="left:484px;top:59px" width="16" height="16"><rect x="2.5" y="2.5" width="11" height="11" fill="#d0d0d0"/><rect x="0.5" y="0.5" width="15" height="15" fill="none" stroke="#333" stroke-width="1" stroke-dasharray="2.5 1.5"/></svg>
<svg class="a" style="left:508px;top:66px" width="6" height="4"><path d="M0 0 H6 L3 4Z" fill="#222"/></svg>
<div class="a" style="left:519px;top:59px;width:1px;height:16px;background:#a8a8a8"></div>
<div class="a" style="left:524px;top:56px;width:23px;height:22px;border:1px solid #60a0e0;background:#e4f0fb"></div>
<svg class="a" style="left:527px;top:59px" width="17" height="17"><path d="M2 2 L2 10 L4.5 7.5 L11 14 L13.5 11.5 L7 5 L9.5 2.5Z" fill="#111"/><path d="M2 2 L14.5 14.5" stroke="#111" stroke-width="2.8"/></svg>
<div class="a" style="left:551px;top:59px;width:1px;height:16px;background:#a8a8a8"></div>
<svg class="a" style="left:557px;top:60px" width="19" height="14"><path d="M1 9 L6 4 Q8 3 10 4 L14 4 V11 L8 12 Q5 12 4 11Z" fill="#d88840" stroke="#8a4a18" stroke-width="0.7"/><path d="M6 7 H12 M5 9 H11" stroke="#8a4a18" stroke-width="0.7"/><rect x="14" y="2.5" width="4" height="10" fill="#2a7ad0"/></svg>
<div class="a" style="left:582px;top:59px;width:1px;height:16px;background:#a8a8a8"></div>
<svg class="a" style="left:588px;top:58px" width="17" height="17"><path d="M8.5 1 V16 M1 8.5 H16" stroke="#111" stroke-width="2"/><path d="M8.5 0 L5.5 3.5 H11.5Z M8.5 17 L5.5 13.5 H11.5Z M0 8.5 L3.5 5.5 V11.5Z M17 8.5 L13.5 5.5 V11.5Z" fill="#111"/></svg>
<svg class="a" style="left:613px;top:58px" width="16" height="17"><path d="M5 4.5 A6 6 0 1 0 12 5" fill="none" stroke="#111" stroke-width="2"/><path d="M9 0.5 L4 4.5 L9 8Z" fill="#111"/></svg>
<svg class="a" style="left:637px;top:59px" width="16" height="16"><rect x="0.5" y="0.5" width="15" height="15" fill="#fff" stroke="#777" stroke-width="0.8"/><rect x="1" y="6" width="9" height="9.5" fill="#111"/></svg>
<div class="a" style="left:660px;top:59px;width:1px;height:16px;background:#a8a8a8"></div>
<svg class="a" style="left:668px;top:59px" width="20" height="16"><path d="M4 10 Q4 1.5 11 1.5 Q18 1.5 18 10Z" fill="#e41010"/><path d="M5 5 Q9 2 13 3" stroke="#ff8080" stroke-width="1" fill="none"/><ellipse cx="12" cy="11" rx="7" ry="2.2" fill="#e8e8e8" stroke="#888" stroke-width="0.6"/><circle cx="4.5" cy="11" r="3.5" fill="#eee" stroke="#666" stroke-width="0.8"/><path d="M11 11 H17" stroke="#c00" stroke-width="1"/></svg>
<svg class="a" style="left:692px;top:66px" width="6" height="4"><path d="M0 0 H6 L3 4Z" fill="#222"/></svg>
<div class="a" style="left:704px;top:59px;width:1px;height:16px;background:#a8a8a8"></div>
<svg class="a" style="left:711px;top:58px" width="17" height="17"><path d="M1 7 L8 3 L16 6 V13 L9 16 L1 12Z" fill="#4060d0"/><path d="M1 7 L5 5 V10 L9 12 V16 L1 12Z" fill="#e040c0"/><path d="M5 5 L8 3 L16 6 L9 9Z" fill="#6080f0"/><path d="M9 9 L16 6 V13 L9 16Z" fill="#2a40a0"/></svg>
<svg class="a" style="left:736px;top:58px" width="15" height="17"><path d="M2 3 Q7 0 12 2 V15 Q7 17 2 15Z" fill="#6a9ad8" stroke="#2a4a80" stroke-width="0.8"/><rect x="4" y="4" width="2.5" height="10" fill="#e0b040"/><rect x="8" y="4" width="2.5" height="10" fill="#e0b040"/></svg>

<!-- VIEWPORT -->
<div class="a" style="left:237px;top:79px;width:1px;height:488px;background:#e8ecf0"></div>
<div id="vp" class="a" style="left:238px;top:79px;width:554px;height:488px;overflow:hidden;background:linear-gradient(#dbe3ee 0%,#e6ecf3 35%,#eef2f6 60%,#f6f8fa 100%)">
<!--ENGINE-->
<svg class="a" style="left:0;top:0" width="554" height="488" viewBox="238 79 554 488">
<defs>
<radialGradient id="shad" cx="0.5" cy="0.5" r="0.5"><stop offset="0" stop-color="#707070" stop-opacity="1"/><stop offset="0.45" stop-color="#8c8c8c" stop-opacity="0.9"/><stop offset="1" stop-color="#c0c0c0" stop-opacity="0"/></radialGradient>
<radialGradient id="glow" cx="0.5" cy="0.5" r="0.5"><stop offset="0" stop-color="#ffffff" stop-opacity="1"/><stop offset="1" stop-color="#ffffff" stop-opacity="0"/></radialGradient>
<linearGradient id="silv" x1="0" y1="0" x2="1" y2="1"><stop offset="0" stop-color="#f4f4f6"/><stop offset="0.5" stop-color="#c4c6ca"/><stop offset="1" stop-color="#8a8c90"/></linearGradient>
<linearGradient id="silvh" x1="0" y1="0" x2="1" y2="0"><stop offset="0" stop-color="#9a9ca0"/><stop offset="0.4" stop-color="#f0f0f2"/><stop offset="1" stop-color="#a8aaae"/></linearGradient>
<linearGradient id="silvv" x1="0" y1="0" x2="0" y2="1"><stop offset="0" stop-color="#f0f0f2"/><stop offset="0.6" stop-color="#b8babe"/><stop offset="1" stop-color="#88898c"/></linearGradient>
<linearGradient id="box" x1="0" y1="0" x2="1" y2="1"><stop offset="0" stop-color="#4e4c48"/><stop offset="0.6" stop-color="#3c3a36"/><stop offset="1" stop-color="#2e2c29"/></linearGradient>
<linearGradient id="vc" x1="0" y1="0" x2="1" y2="1"><stop offset="0" stop-color="#3a3734"/><stop offset="0.45" stop-color="#2e2b28"/><stop offset="1" stop-color="#161412"/></linearGradient>
<radialGradient id="blk" cx="0.4" cy="0.35" r="0.7"><stop offset="0" stop-color="#484848"/><stop offset="1" stop-color="#121212"/></radialGradient>
<radialGradient id="alt" cx="0.4" cy="0.35" r="0.75"><stop offset="0" stop-color="#68686a"/><stop offset="0.6" stop-color="#464648"/><stop offset="1" stop-color="#262628"/></radialGradient>
<linearGradient id="hose" x1="0" y1="0" x2="0" y2="1"><stop offset="0" stop-color="#3a3a3a"/><stop offset="0.5" stop-color="#222"/><stop offset="1" stop-color="#111"/></linearGradient>
<linearGradient id="crank" x1="0" y1="0" x2="0" y2="1"><stop offset="0" stop-color="#f4f4f6"/><stop offset="0.5" stop-color="#d0d2d6"/><stop offset="1" stop-color="#9a9ca0"/></linearGradient>
<linearGradient id="yel" x1="0" y1="0" x2="0.3" y2="1"><stop offset="0" stop-color="#fff27a"/><stop offset="0.5" stop-color="#f0d000"/><stop offset="1" stop-color="#b89600"/></linearGradient>
</defs>
<!-- background glow and shadow -->
<filter id="bl30" x="-50%" y="-50%" width="200%" height="200%"><feGaussianBlur stdDeviation="28"/></filter>
<filter id="bl15" x="-50%" y="-50%" width="200%" height="200%"><feGaussianBlur stdDeviation="14"/></filter>
<ellipse cx="300" cy="480" rx="130" ry="170" fill="url(#glow)" opacity="0.95"/>
<path d="M395 510 L430 575 L560 590 L670 590 L712 505 L735 425 L705 385 L600 440 L460 460Z" fill="#a0a0a0" filter="url(#bl30)"/>
<path d="M430 505 L520 555 L620 568 L672 520 L695 455 L660 440 L560 480Z" fill="#6e6e6e" filter="url(#bl15)" opacity="0.85"/>
<path d="M405 530 L440 575 L640 590 L700 560 L690 500 L540 520Z" fill="#8c8c8c" filter="url(#bl15)" opacity="0.7"/>
<g id="eng">
<!-- intake plenum behind -->
<path d="M545 124 Q600 126 625 150 Q648 182 656 228 L652 262 L600 268 L565 150Z" fill="#2c2a28"/>
<path d="M596 152 Q622 170 638 208 L630 224 Q614 188 590 170Z" fill="#45423e"/>
<path d="M610 145 Q634 165 648 205" fill="none" stroke="#55524e" stroke-width="1.5"/>
<path d="M550 238 L596 150 L625 175 L640 240 L600 268Z" fill="#2a2826"/>
<!-- general engine mass -->
<path d="M336 228 L372 224 L402 192 L560 240 L640 250 L700 250 L742 262 L744 300 L740 357 L712 390 L694 416 L662 440 L640 445 L615 480 L575 500 L540 510 L490 505 L430 475 L400 462 L370 440 L356 410 L336 380 L338 330 L338 262Z" fill="#383838"/>
<!-- intake manifold ribs center -->
<path d="M520 250 Q560 240 600 262 L620 320 L575 335 L540 300Z" fill="#2e2e2e"/>
<path d="M545 262 L560 330 M565 258 L585 325 M590 268 L600 320" stroke="#4a4a4a" stroke-width="2"/>
<path d="M540 268 L552 262 L556 270 L544 276Z" fill="#ddd"/>
<!-- upper left engine side -->
<path d="M336 230 L372 226 L398 196 L440 220 L430 262 L360 272 L337 262Z" fill="#3a3a3c"/>
<ellipse cx="356" cy="250" rx="22" ry="24" fill="#7a7a7c"/><ellipse cx="360" cy="252" rx="14" ry="16" fill="#6a6a6c"/><path d="M340 244 L363 242 L366 280 L344 282Z" fill="#8a8a8c"/>
<path d="M350 232 L358 231 L360 282 L352 283Z" fill="#a8a8aa"/>
<path d="M336 232 Q346 224 362 227 L365 245 L340 249Z" fill="#1e1e1e"/>
<path d="M336 236 L352 234 L350 242 L338 244Z" fill="#d8b830" opacity="0.8"/>
<path d="M372 248 L404 242 L414 264 L384 272Z" fill="#1a1a1a"/><path d="M392 224 L428 220 L436 244 L400 250Z" fill="#202020"/>
<path d="M375 248 L400 244 M378 254 L405 250" stroke="#666" stroke-width="1"/>
<!-- wiring center -->
<path d="M440 215 Q470 240 500 260 L520 262 L545 250 L580 245" fill="none" stroke="#1e1e1e" stroke-width="4"/>
<path d="M415 205 Q435 235 430 262" fill="none" stroke="#262626" stroke-width="4"/>
<path d="M455 226 Q470 235 478 250" fill="none" stroke="#50565e" stroke-width="3"/>
<!-- front cover area -->
<path d="M360 340 L440 330 L480 330 L560 345 L598 372 L602 430 L565 470 L500 472 L450 455 L400 440 L370 420Z" fill="#6c6e72"/>
<path d="M478 365 L520 362 L548 390 L545 425 L505 436 L482 405Z" fill="#8e9094"/>
<path d="M485 378 L510 376 L525 400 L505 410Z" fill="#b0b2b6"/>
<path d="M455 380 L478 372 L482 400 L462 420Z" fill="#9a9ca0"/>
<path d="M560 420 L590 410 L598 440 L570 455Z" fill="#9a9ca0"/>
<path d="M476 420 L500 416 L506 440 L482 446Z" fill="#a8aaae"/>
<circle cx="470" cy="395" r="3" fill="#d0d2d4"/><circle cx="512" cy="440" r="3" fill="#d0d2d4"/><circle cx="540" cy="432" r="3" fill="#c0c2c4"/>
<path d="M380 338 L430 336 L440 372 L400 376Z" fill="#8a8c90"/>
<!-- thermostat housing -->
<path d="M534 356 L552 346 L570 358 L574 398 L560 412 L540 404 L532 380Z" fill="#8c8e92"/>
<path d="M540 360 L556 352 L566 366 L568 396 L552 404 L542 392Z" fill="url(#silvh)"/>
<ellipse cx="559" cy="399" rx="12" ry="10" transform="rotate(-30 559 399)" fill="#c8cacc"/>
<ellipse cx="560" cy="400" rx="7" ry="6" transform="rotate(-30 560 400)" fill="#6a6c70"/>
<circle cx="545" cy="354" r="4" fill="#d0d2d4"/>
<!-- exhaust manifold right -->
<path d="M716 316 L737 330 L740 357 L712 390 L694 416 L662 440 L640 436 L648 404 L672 376 L698 344Z" fill="url(#silv)"/>





<path d="M702 350 L718 338 L724 354 L708 370Z" fill="#eeeff1"/>
<path d="M678 378 L694 366 L700 382 L684 396Z" fill="#e6e8ea"/>
<path d="M654 406 L670 394 L676 410 L660 424Z" fill="#dcdee2"/>
<path d="M724 336 L737 342 L737 356 L726 352Z" fill="#d4d6d8"/>
<path d="M706 376 L730 352 M684 402 L706 380 M662 430 L682 408" stroke="#8a8c90" stroke-width="2"/>
<!-- right valve cover -->
<path d="M708 240 Q726 236 738 250 L746 266 Q747 285 742 298 L722 320 L700 344 L658 390 L640 372 L624 342 L614 330 L632 312 L676 265Z" fill="url(#vc)"/>
<path d="M708 240 Q726 236 738 250 L743 262 L700 310 L660 352 L642 340 L636 322 L680 270Z" fill="#383532"/>
<path d="M718 250 L660 320" stroke="#4e4b47" stroke-width="2"/>
<circle cx="719" cy="325" r="2.5" fill="#c8c8c8"/><circle cx="691" cy="358" r="2.5" fill="#c8c8c8"/><circle cx="663" cy="393" r="2.5" fill="#c8c8c8"/><path d="M743 282 L750 276 M722 322 L730 318" stroke="#c0c0c0" stroke-width="2"/>
<!-- black hose along valve cover -->

<!-- coolant reservoir -->
<path d="M566 342 Q584 326 615 330 L632 344 L642 374 L644 440 L640 465 L626 476 L604 472 L580 462 L565 445Z" fill="#2a2826"/>
<path d="M600 338 L628 342 L640 372 L642 420 L622 400 L610 372Z" fill="#383531"/>
<path d="M568 395 L612 392 L626 400 L642 420" fill="none" stroke="#4a4742" stroke-width="1.5"/>
<ellipse cx="598" cy="381" rx="21" ry="13" fill="#d8b800"/>
<path d="M578 376 Q580 364 598 362 Q616 364 619 376 L618 381 Q598 392 578 381Z" fill="#ffe020"/>
<ellipse cx="598" cy="373" rx="9" ry="5" fill="none" stroke="#d0b000" stroke-width="1"/>
<!-- AC line loop -->
<path d="M590 398 Q582 440 588 478 L578 492 L582 512 L615 505 L632 478 L640 470" fill="none" stroke="#c4c6ca" stroke-width="4"/>
<path d="M582 512 L620 515" fill="none" stroke="#b0b2b6" stroke-width="3"/>
<path d="M594 418 L596 466" stroke="#e4e6e8" stroke-width="8"/>
<path d="M589 426 H601 M589 434 H601 M589 442 H601 M589 450 H601" stroke="#8a8c90" stroke-width="1.2"/>
<!-- oil filter -->
<path d="M522 495 L570 488 L573 528 Q560 542 535 538 Q520 532 520 518Z" fill="url(#blk)"/>
<path d="M522 522 Q545 540 572 526" fill="none" stroke="#333" stroke-width="3"/>
<!-- alternator -->
<path d="M538 292 L562 300 L560 345 L540 350Z" fill="#2e2e30"/>
<ellipse cx="490" cy="322" rx="52" ry="48" fill="url(#alt)"/>
<path d="M452 300 Q480 278 520 288 Q500 292 480 305Z" fill="#6c6c6e" opacity="0.6"/>
<path d="M520 295 L540 330 L525 360" fill="none" stroke="#2a2a2a" stroke-width="5"/>
<!-- AC compressor -->
<path d="M350 275 Q380 250 420 250 L465 262 Q476 285 472 312 L420 338 L372 334Z" fill="url(#blk)"/>
<path d="M385 262 Q420 250 460 266 L445 272 Q415 262 390 272Z" fill="#505050" opacity="0.8"/>
<!-- AC pulley -->
<ellipse cx="369" cy="314" rx="32.5" ry="36" transform="rotate(-12 369 314)" fill="url(#silv)"/>
<ellipse cx="373" cy="315" rx="27" ry="31" transform="rotate(-12 373 315)" fill="#121212"/>
<ellipse cx="375" cy="316" rx="19" ry="22" transform="rotate(-12 375 316)" fill="#1e1e1e" stroke="#2c2c2c" stroke-width="2"/>
<ellipse cx="376" cy="317" rx="8" ry="9" fill="#0c0c0c" stroke="#262626" stroke-width="1.5"/>
<path d="M327 268 Q334 262 342 270 L340 284 L330 282Z" fill="none" stroke="#c0c2c6" stroke-width="2"/>
<!-- thin black hose left -->
<path d="M386 201 L352 197 Q342 197 336 206 L304 258 L301 278" fill="none" stroke="#1c1c1c" stroke-width="5"/><path d="M352 195.5 Q342 196 336 204 L304 256" fill="none" stroke="#5a5a5a" stroke-width="1"/>
<rect x="295" y="276" width="12" height="21" rx="2" fill="url(#silvh)"/>
<path d="M295 281 H307 M295 286 H307 M295 291 H307" stroke="#8a8a8a" stroke-width="1"/>
<!-- tensioner bracket (drum) -->
<path d="M355 356 L394 350 L402 396 L360 404Z" fill="url(#silvv)"/>
<ellipse cx="374" cy="381" rx="15" ry="19" transform="rotate(-12 374 381)" fill="#d4d6da" stroke="#9a9ca0" stroke-width="1.2"/>
<rect x="367" y="378" width="10" height="11" fill="#a4a6aa" stroke="#6a6c70" stroke-width="0.8"/>
<path d="M388 352 L402 350 L406 372 L396 376Z" fill="#8a8c90"/>
<!-- idler pulley top -->
<ellipse cx="460" cy="351" rx="19" ry="19" fill="#d8dadd"/>
<ellipse cx="461" cy="351" rx="12" ry="12" fill="#a8aaae"/>
<circle cx="462" cy="351" r="5" fill="#e8e8e8"/>
<!-- tensioner pulley drum -->
<path d="M334 366 L352 362 L358 400 L340 405Z" fill="url(#silvh)"/>
<ellipse cx="338" cy="385" rx="13" ry="20" transform="rotate(-8 338 385)" fill="#dcdee0" stroke="#b0b2b4" stroke-width="1"/>
<ellipse cx="339" cy="386" rx="8" ry="12" transform="rotate(-8 339 386)" fill="#1a1a1a"/>
<circle cx="339" cy="386" r="4" fill="#c8c8c8"/>
<!-- small idler -->
<ellipse cx="386" cy="425" rx="16" ry="18" transform="rotate(-10 386 425)" fill="#dcdee0" stroke="#b0b2b4" stroke-width="1"/>
<ellipse cx="387" cy="425" rx="10" ry="12" transform="rotate(-10 387 425)" fill="#1a1a1a"/>
<circle cx="387" cy="425" r="4.5" fill="#c8c8c8"/>
<!-- water outlet -->
<path d="M364 436 L396 432 L400 458 L368 462Z" fill="url(#silvv)"/>
<ellipse cx="366" cy="449" rx="5" ry="13" fill="#f0f2f4"/>
<!-- black damper pulley -->
<ellipse cx="435" cy="414" rx="39" ry="39" fill="#161616"/>
<ellipse cx="431" cy="419" rx="30" ry="31" fill="#262626"/>
<ellipse cx="429" cy="421" rx="22" ry="22" fill="#1a1a1a"/>
<circle cx="421" cy="426" r="12" fill="#cfd1d5"/>
<circle cx="420" cy="426" r="6" fill="#f0f0f0"/>
<!-- crank pulley -->
<path d="M425 448 L470 438 L502 460 L510 505 L482 530 L440 533Z" fill="#bcbec2"/>
<path d="M468 442 L498 460 L506 505 L494 518 L478 470Z" fill="#dcdee0"/>
<path d="M458 446 L470 468 L476 520 L466 526 L458 470Z" fill="#a4a6aa"/>
<ellipse cx="436" cy="490" rx="49" ry="39" transform="rotate(48 436 490)" fill="#b8babe"/>
<ellipse cx="437" cy="490" rx="44" ry="34" transform="rotate(48 437 490)" fill="#e2e3e5"/>
<path d="M404 470 Q420 456 446 458 L452 476 L416 498Z" fill="#a8aaae"/>
<path d="M412 478 L446 468 L444 482 L420 492Z" fill="#f4f4f6"/>
<path d="M420 505 Q445 520 470 508 L468 498 Q445 508 424 496Z" fill="#f0f1f3"/>
<!-- PS pulley -->
<ellipse cx="534" cy="461" rx="38" ry="36" fill="#b8babe"/>
<ellipse cx="533" cy="460" rx="31" ry="29" fill="#dfe1e3"/>
<ellipse cx="533" cy="460" rx="22" ry="20" fill="#cfd1d3"/>
<ellipse cx="519" cy="448" rx="5" ry="4" fill="#808286"/><ellipse cx="549" cy="450" rx="5" ry="4" fill="#808286"/><ellipse cx="542" cy="476" rx="5" ry="4" fill="#808286"/><ellipse cx="518" cy="472" rx="5" ry="4" fill="#909296"/>
<circle cx="533" cy="461" r="8" fill="#161616"/>
<circle cx="533" cy="461" r="3.5" fill="#ccc"/>
<!-- belts -->
<path d="M348 273 Q392 266 406 298 L409 380" fill="none" stroke="#101010" stroke-width="8"/>
<path d="M340 298 L326 372" fill="none" stroke="#101010" stroke-width="6"/>
<path d="M330 400 Q340 408 356 404 L400 408" fill="none" stroke="#101010" stroke-width="5"/>
<path d="M452 336 L472 450" fill="none" stroke="#101010" stroke-width="6"/>
<path d="M444 334 Q465 318 490 334 L568 428 L580 480" fill="none" stroke="#101010" stroke-width="10"/>
<path d="M468 529 L552 499" fill="none" stroke="#101010" stroke-width="5"/>
<path d="M400 378 L406 440" fill="none" stroke="#101010" stroke-width="5"/>
<!-- air box front face -->
<path d="M386 166 L470 186 L560 222 L596 194 L612 166 L602 208 L585 244 L542 250 L520 242 L490 235 L430 218 L400 204 L386 186Z" fill="#262422"/>
<path d="M392 190 L430 212 L520 236 L580 240" fill="none" stroke="#3e3c38" stroke-width="3"/>
<!-- air box top -->
<path d="M388 170 L425 133 L450 116 Q466 108 484 111 L600 148 Q618 155 611 170 L594 200 Q580 232 560 228 L470 194 Q420 178 390 172Z" fill="url(#box)"/>
<g stroke="#201e1c" stroke-width="2.6" stroke-linecap="round" opacity="0.9"><path d="M426.5 158.5 L480.6 116.5"/><path d="M440.0 164.6 L494.0 122.5"/><path d="M452.0 167.6 L507.6 127.0"/><path d="M464.0 172.0 L521.0 130.0"/><path d="M477.6 176.6 L534.6 134.5"/><path d="M491.0 181.0 L548.0 139.0"/><path d="M506.0 185.6 L560.0 142.0"/><path d="M518.0 190.0 L572.0 146.5"/><path d="M533.0 196.0 L584.0 151.0"/></g>
<g stroke="#65625d" stroke-width="1" opacity="0.9"><path d="M428.5 160.0 L482.6 118.0"/><path d="M442.0 166.1 L496.0 124.0"/><path d="M454.0 169.1 L509.6 128.5"/><path d="M466.0 173.5 L523.0 131.5"/><path d="M479.6 178.1 L536.6 136.0"/><path d="M493.0 182.5 L550.0 140.5"/><path d="M508.0 187.1 L562.0 143.5"/><path d="M520.0 191.5 L574.0 148.0"/><path d="M535.0 197.5 L586.0 152.5"/></g>
<path d="M390 173 Q420 179 470 195 L558 229 Q580 233 594 201 L611 170" fill="none" stroke="#6e6c68" stroke-width="1.3"/>
<path d="M430 183 L448 178 M520 212 L535 208 M495 208 L512 203" stroke="#8a8884" stroke-width="1.2"/>
<!-- intake cone -->
<path d="M398 126 L425 132 L402 168 L386 172Z" fill="#1a1a1a"/>
<!-- intake hose -->
<path d="M312 128 L328 122 L342 119 L356 115 L373 115 L392 122 L402 127 L404 172 L384 182 L372 186 L356 177 L342 175 L327 184Z" fill="url(#hose)"/>
<g stroke="#4a4a4a" stroke-width="2.2"><path d="M344 121 L350 176"/><path d="M354 118 L360 178"/><path d="M364 116 L370 182"/><path d="M374 116 L380 184"/></g>
<path d="M330 124 L346 120 L348 176 L330 182Z" fill="#262626"/>
<ellipse cx="314" cy="156" rx="8" ry="31" transform="rotate(-20 314 156)" fill="#2a2a2a" stroke="#dcdee0" stroke-width="4"/>
<ellipse cx="314" cy="156" rx="3" ry="22" transform="rotate(-20 314 156)" fill="#111"/>
<ellipse cx="394" cy="150" rx="8" ry="25" transform="rotate(-15 394 150)" fill="none" stroke="#cfd1d3" stroke-width="3.5"/>
<!-- red caps -->
<ellipse cx="416" cy="128" rx="6" ry="6" fill="#c81818"/><ellipse cx="414" cy="126" rx="2" ry="2" fill="#f06060"/>
<ellipse cx="623" cy="164" rx="6" ry="8" fill="#b01010"/>
<ellipse cx="621" cy="164" rx="3" ry="5" fill="#600"/>
<!-- yellow lift hook -->
<path d="M436 124 L442 105 L449 104 L456 120 L451 122 L446 111 L441 125Z" fill="#f0d000"/>
<!-- silver pipe -->
<path d="M392 202 Q380 214 390 232 L404 250" fill="none" stroke="#a8aaae" stroke-width="8"/><path d="M391 203 Q379 215 389 232 L403 249" fill="none" stroke="#e4e6e8" stroke-width="3"/>
<path d="M500 260 L570 310 L590 316" fill="none" stroke="#b4b6ba" stroke-width="3"/>
<ellipse cx="427" cy="226" rx="6" ry="6" fill="#f0d000"/>
<path d="M636 222 L688 212 L716 236 L706 254 L672 284 L640 282Z" fill="#2c2c2c"/>
<path d="M688 216 L712 226 L714 236 L700 236Z" fill="#141414"/>
<!-- fuel rail + wiring -->
<path d="M704 228 L594 308" stroke="#86888e" stroke-width="8"/>
<path d="M703 226 L593 306" stroke="#c8cace" stroke-width="2.5"/>
<path d="M500 260 L570 310 L590 316 L600 306" fill="none" stroke="#b4b6ba" stroke-width="3.5"/>
<path d="M580 242 L610 250 L640 228 L652 234 L656 250 L660 266 L668 270" fill="none" stroke="#161616" stroke-width="4.5"/>
<path d="M672 198 L684 220 L700 236 L708 242" fill="none" stroke="#141414" stroke-width="3.5"/>
<path d="M678 225 L708 230 L712 240 L704 244" fill="none" stroke="#d01818" stroke-width="2"/>
<path d="M648 254 L656 270 L684 268" fill="none" stroke="#d01818" stroke-width="2"/>
<path d="M615 286 L636 292 L642 304" fill="none" stroke="#d01818" stroke-width="2"/>
<path d="M662 258 L666 242 M638 292 L640 280 M606 320 L610 304" stroke="#d89020" stroke-width="5"/>
<path d="M600 200 L620 215 L615 250 L600 262Z" fill="#323232"/>
<path d="M604 262 L618 258 L620 290 L606 294Z" fill="#555558"/>
<path d="M636 230 L650 226 L652 256 L638 260Z" fill="#555558"/>
<path d="M708 246 L692 248 L684 258 L674 280 L656 300 L636 316 L622 328 Q640 340 655 362 Q662 380 660 400 L648 432" fill="none" stroke="#121212" stroke-width="8" stroke-linejoin="round"/>
<path d="M690 246 L680 262 L670 282" fill="none" stroke="#4a4a4a" stroke-width="1.5"/>
<!-- coil pack top -->
<path d="M653 186 L682 183 L684 211 L670 215 L654 211Z" fill="#dcdde0"/><path d="M656 192 L681 190 M656 197 L682 195 M656 202 L682 200 M656 207 L682 205" stroke="#a8aaae" stroke-width="0.8"/>
<ellipse cx="670" cy="210" rx="14" ry="4" fill="#c01010"/>
<path d="M662 172 L672 168 L681 171 L681 192 L672 196 L662 192Z" fill="url(#yel)"/><path d="M662 180 L681 178" stroke="#a88a00" stroke-width="1.2"/>
<path d="M671 194 Q680 215 700 240" fill="none" stroke="#1a1a1a" stroke-width="3"/>
<!-- yellow connectors -->
<path d="M660 218 L670.2 215 L677 217 L677 229 L668.5 232 L660 230Z" fill="url(#yel)"/><path d="M662 222.65 L675 220.95" stroke="#a88a00" stroke-width="1.2"/><path d="M628 246 L639.4 243 L647 245 L647 259 L637.5 262 L628 260Z" fill="url(#yel)"/><path d="M630 251.55 L645 249.65" stroke="#a88a00" stroke-width="1.2"/><path d="M595 278 L607.0 275 L615 277 L615 289 L605.0 292 L595 290Z" fill="url(#yel)"/><path d="M597 282.65 L613 280.95" stroke="#a88a00" stroke-width="1.2"/><path d="M684 233 L692.4 230 L698 232 L698 239 L691.0 242 L684 240Z" fill="url(#yel)"/><path d="M686 235.4 L696 234.2" stroke="#a88a00" stroke-width="1.2"/>


</g>
</svg>

<!--/ENGINE-->
<div class="t" style="left:2px;top:3px;font-weight:bold;font-size:12px;color:#1a50e0;letter-spacing:-0.4px">User</div>
</div>

</body></html>
